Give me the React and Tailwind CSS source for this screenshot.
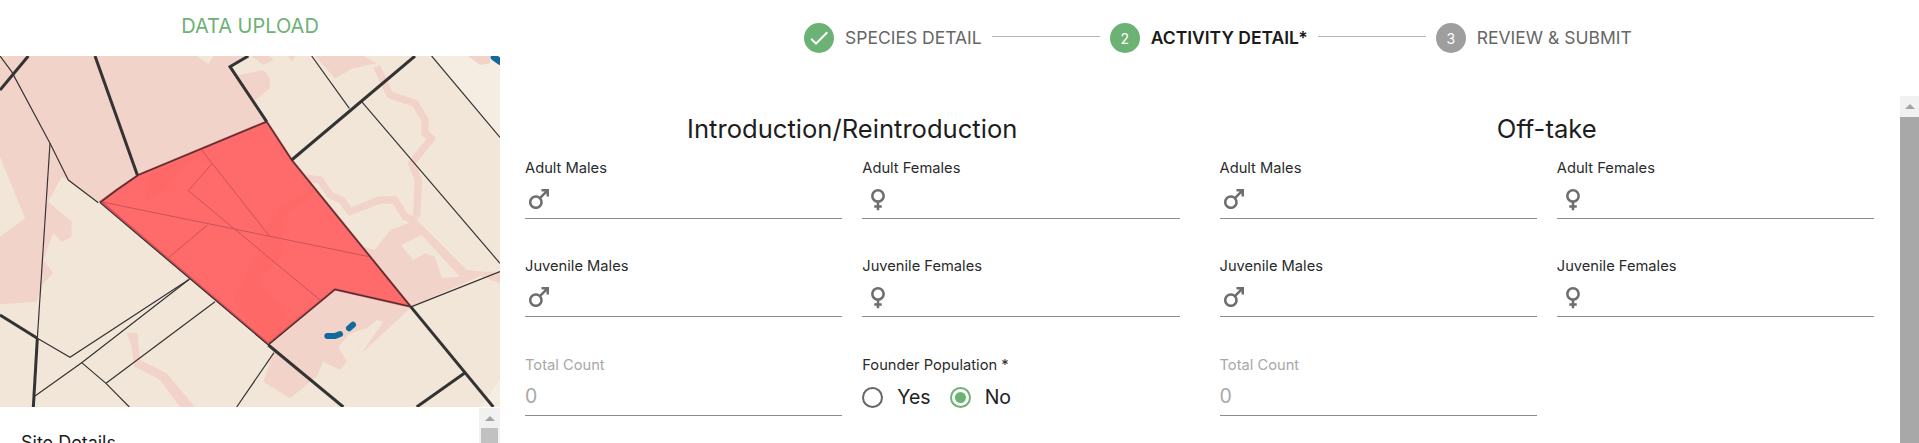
import React from "react";
import { MdMale, MdFemale, MdCheck } from "react-icons/md";

const Field = ({ label, icon, value, disabled, className = "" }) => (
	<div className={`h-[61px] flex flex-col border-b border-[#8c8c8c] ${className}`}>
		<div className={`h-5 text-[14.7px] leading-5 ${disabled ? "text-[#a8a8a8]" : "text-[#2b2b2b]"}`}>{label}</div>
		<div className="flex-1 flex items-center">
			{icon === "male" && <MdMale className="w-[30px] h-[30px] ml-[-1px] mt-[1px] text-[#6e6e6e]" />}
			{icon === "female" && <MdFemale className="w-[30px] h-[30px] ml-[1px] mt-[2px] text-[#6e6e6e]" />}
			{value && <span className="text-[19.5px] text-[#a8a8a8] mt-[3px]">{value}</span>}
		</div>
	</div>
);

const Radio = ({ label, checked }) => (
	<div className="flex items-center gap-[14px]">
		<div className={`w-[21px] h-[21px] rounded-full border-2 flex items-center justify-center ${checked ? "border-[#6cb274]" : "border-[#666]"}`}>
			{checked && <div className="w-[11px] h-[11px] rounded-full bg-[#6cb274]" />}
		</div>
		<span className="text-[19.5px] leading-6 text-[#222]">{label}</span>
	</div>
);

const Section = ({ title, founder }) => (
	<div>
		<h2 className="text-[25.6px] leading-8 text-[#1d1d1d] text-center">{title}</h2>
		<div className="mt-[13px] grid grid-cols-2 gap-x-5 gap-y-[37px]">
			<Field label="Adult Males" icon="male" />
			<Field label="Adult Females" icon="female" />
			<Field label="Juvenile Males" icon="male" />
			<Field label="Juvenile Females" icon="female" />
			<Field label="Total Count" value="0" disabled className="mt-px" />
			{founder && (
				<div className="mt-px">
					<div className="h-5 text-[14.7px] leading-5 text-[#2b2b2b]">Founder Population *</div>
					<div className="flex gap-[19px] mt-[10px]">
						<Radio label="Yes" />
						<Radio label="No" checked />
					</div>
				</div>
			)}
		</div>
	</div>
);

const ParcelMap = () => (
	<svg viewBox="0 168 1500 1053" className="w-[500px] h-[351px] shrink-0 block bg-[#f2e6d9]">
		{/* lighter corners */}
		<polygon fill="#f5ede1" points="1295,168 1500,168 1500,412" />
		<polygon fill="#f5ede1" points="1440,1221 1500,1140 1500,1221" />

		{/* pink land cover */}
		<g fill="#f2d3c9">
			<polygon points="0,168 590,168 625,192 640,168 750,168 690,200 800,365 415,525 300,608 205,540 185,530 145,605 215,665 215,710 185,725 160,700 130,780 160,820 125,855 110,905 0,913 0,710 75,655 0,470" />
			<polygon points="755,168 790,195 820,180 808,168" />
			<polygon points="865,168 875,185 885,168" />
			<polygon points="715,225 790,210 810,235 810,265 760,305" />
			<polygon points="945,168 1005,235 1060,205 1130,190 1090,168" />
			<polygon points="1405,168 1440,195 1470,190 1470,168" />
			<polygon fillRule="evenodd" points="1090,740 1125,750 1170,690 1250,660 1400,810 1460,815 1500,815 1500,850 1440,828 1235,920 1090,740 1205,735 1210,745 1240,780 1275,760 1305,770 1325,835 1380,830 1265,705 1205,735" />
			<polygon points="1005,868 1235,920 1085,1060 1075,1040 1130,960 1100,985 1050,1000 1015,1040 1040,1085 1020,1110 970,1085 950,1130 870,1195 790,1145 820,1060 805,1032" />
			<polygon points="380,998 412,1000 420,1080 500,1120 580,1215 580,1221 540,1221 480,1140 430,1112 403,1100 395,1040" />
			<polygon points="450,525 600,450 640,490 570,480 495,570 430,610" />
			<polygon points="830,620 960,560 850,650 850,760 780,840 870,960 960,900 1000,870 800,1032 700,900" />
		</g>
		<polygon fill="#f2e6d9" points="1130,960 1150,965 1085,1060 1075,1040" />
		<g fill="none" stroke="#f2d3c9" strokeWidth="22" strokeLinejoin="round">
			<polyline points="1130,200 1170,285 1245,310 1275,360 1275,400 1295,415 1235,490 1255,540 1250,650" />
			<polyline points="920,535 960,540 990,585 1025,600 1050,635 1140,600 1185,600 1215,650 1250,665" />
		</g>

		{/* selected parcel */}
		<polygon points="302,605 350,570 415,525 800,365 875,480 1232,920 1005,868 805,1032" fill="#ff5a5a" fillOpacity="0.88" stroke="#d34d52" strokeWidth="7" />
		<g fill="none" stroke="#c9545a" strokeWidth="3">
			<line x1="302" y1="605" x2="1108" y2="770" />
			<line x1="605" y1="450" x2="808" y2="708" />
			<polyline points="635,492 565,572 960,900" />
			<line x1="622" y1="675" x2="507" y2="772" />
		</g>

		{/* water */}
		<g fill="none" stroke="#14699c" strokeWidth="18" strokeLinecap="round">
			<polyline points="982,1008 1005,1008 1020,1002" />
			<line x1="1047" y1="985" x2="1059" y2="974" />
			<line x1="1482" y1="172" x2="1500" y2="185" strokeWidth="20" />
		</g>

		{/* boundaries */}
		<g fill="none" stroke="#333" strokeWidth="3.5">
			<polyline points="0,168 35,215 150,430 205,540 295,608" />
			<line x1="150" y1="430" x2="112" y2="1015" />
			<polyline points="112,1015 210,1072 568,838" />
			<polyline points="105,1188 245,1088 568,838" />
			<polyline points="245,1088 318,1150 388,1221" />
			<line x1="318" y1="1150" x2="645" y2="905" />
			<line x1="822" y1="1058" x2="710" y2="1221" />
			<line x1="935" y1="168" x2="1048" y2="325" />
			<line x1="1085" y1="305" x2="1500" y2="790" />
			<line x1="1295" y1="168" x2="1500" y2="412" />
			<line x1="1235" y1="920" x2="1500" y2="815" />
			<polyline points="300,608 350,570 415,525 800,365 875,480 1232,920 1005,868 805,1035 300,608" />
		</g>
		<g fill="none" stroke="#333" strokeWidth="9">
			<line x1="0" y1="270" x2="85" y2="168" />
			<line x1="285" y1="168" x2="412" y2="525" />
			<polyline points="745,168 690,200 800,365" />
			<line x1="875" y1="480" x2="1245" y2="168" />
			<line x1="1232" y1="920" x2="1480" y2="1221" />
			<line x1="805" y1="1035" x2="1030" y2="1221" />
			<line x1="1250" y1="1221" x2="1393" y2="1120" />
			<line x1="0" y1="945" x2="112" y2="1015" />
			<line x1="112" y1="1015" x2="100" y2="1221" />
		</g>
	</svg>
);

const Step = ({ n, label, state }) => (
	<div className="flex items-center gap-[11px]">
		<div className={`w-[30px] h-[30px] rounded-full flex items-center justify-center text-white text-[14px] ${state === "todo" ? "bg-[#9e9e9e]" : "bg-[#6cb274]"}`}>
			{state === "done" ? <MdCheck className="w-6 h-6" /> : n}
		</div>
		<span className={`text-[17.5px] leading-6 ${state === "active" ? "font-semibold text-[#1a1a1a]" : "text-[#666]"}`}>{label}</span>
	</div>
);

const Connector = () => <div className="w-[108px] h-px bg-[#b5b5b5] mx-[10px] mb-1" />;

const App = () => {
	return (
		<div className="flex w-[1919px] h-[443px] overflow-hidden bg-white font-[Inter,sans-serif]">
			<div className="w-[500px] shrink-0 flex flex-col">
				<div className="h-14 shrink-0 pb-[4px] flex items-center justify-center text-[20px] text-[#6cb274]">DATA UPLOAD</div>
				<ParcelMap />
				<div className="flex-1 flex min-h-0 overflow-hidden">
					<div className="flex-1 pl-[21px] pt-[24px] text-[18px] leading-6 text-[#1a1a1a]">Site Details</div>
					<div className="w-[21px] bg-[#f1f1f1] flex flex-col items-center mt-[1px]">
						<div className="mt-[8px] w-0 h-0 border-x-[5px] border-x-transparent border-b-[5px] border-b-[#a3a3a3]" />
						<div className="mt-[7px] w-[17px] flex-1 bg-[#c1c1c1]" />
					</div>
				</div>
			</div>
			<div className="flex-1 flex flex-col min-w-0">
				<div className="h-24 shrink-0 pl-[304px] pb-5 flex items-center">
					<Step n="1" label="SPECIES DETAIL" state="done" />
					<Connector />
					<Step n="2" label="ACTIVITY DETAIL*" state="active" />
					<Connector />
					<Step n="3" label="REVIEW & SUBMIT" state="todo" />
				</div>
				<div className="flex-1 flex min-h-0">
					<div className="flex-1 pl-[25px] pr-[26px] pt-[17px] grid grid-cols-2 gap-x-10 content-start">
						<Section title="Introduction/Reintroduction" founder />
						<Section title="Off-take" />
					</div>
					<div className="w-[19px] bg-[#f1f1f1] flex flex-col items-center">
						<div className="mt-[8px] w-0 h-0 border-x-[5px] border-x-transparent border-b-[5px] border-b-[#a3a3a3]" />
						<div className="mt-[8px] w-full flex-1 bg-[#a8a8a8]" />
					</div>
				</div>
			</div>
		</div>
	);
};

export default App;
